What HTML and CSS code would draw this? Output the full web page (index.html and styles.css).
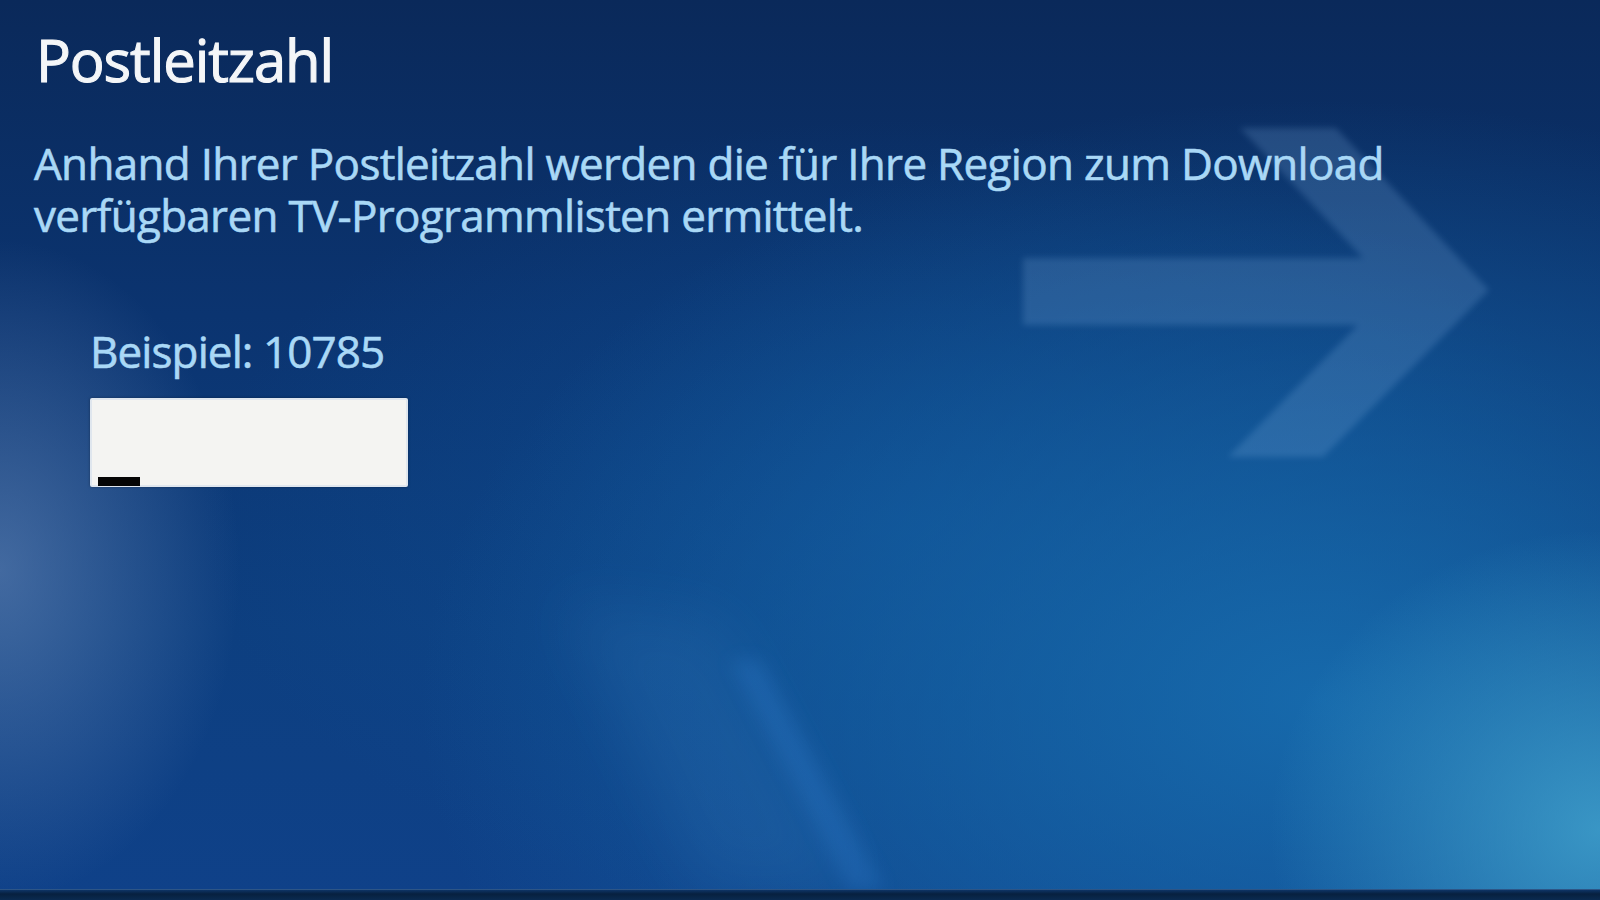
FILE: index.html
```html
<!DOCTYPE html>
<html lang="de">
<head>
<meta charset="utf-8">
<title>Postleitzahl</title>
<link rel="stylesheet" href="styles.css">
</head>
<body>
<div class="screen">
  <svg class="bg-art" viewBox="0 0 1600 900" width="1600" height="900" aria-hidden="true">
    <defs>
      <filter id="soft" x="-20%" y="-20%" width="140%" height="140%">
        <feGaussianBlur stdDeviation="3"/>
      </filter>
      <filter id="wide" x="-50%" y="-50%" width="200%" height="200%">
        <feGaussianBlur stdDeviation="30"/>
      </filter>
      <filter id="line" x="-50%" y="-50%" width="200%" height="200%">
        <feGaussianBlur stdDeviation="9"/>
      </filter>
    </defs>
    <polygon points="560,600 720,620 860,890 700,890" fill="#5aa0e0" opacity="0.10" filter="url(#wide)"/>
    <polygon points="730,660 760,660 885,890 850,890" fill="#3a8ae0" opacity="0.22" filter="url(#line)"/>
    <path d="M1023 258 L1363 258 L1240 128 L1336 128 L1489 290 L1323 457 L1228 457 L1358 325 L1023 325 Z" fill="#8ab8e8" opacity="0.2" filter="url(#soft)"/>
  </svg>
  <main class="content">
    <h1 class="title">Postleitzahl</h1>
    <p class="desc"><span class="line">Anhand Ihrer Postleitzahl werden die für Ihre Region zum Download</span><span class="line">verfügbaren TV-Programmlisten ermittelt.</span></p>
    <div class="field">
      <div class="hint">Beispiel: 10785</div>
      <div class="input"><span class="cursor"></span></div>
    </div>
  </main>
  <div class="bottom-bar"></div>
</div>
</body>
</html>
```
FILE: styles.css
```css
html, body {
  margin: 0;
  padding: 0;
  background: #0b2c60;
}
.screen {
  position: relative;
  width: 1600px;
  height: 900px;
  overflow: hidden;
  font-family: "Open Sans", "Noto Sans", sans-serif;
  background:
    radial-gradient(ellipse 240px 330px at 0px 570px, rgba(120, 150, 195, 0.5), rgba(120, 150, 195, 0) 100%),
    radial-gradient(ellipse 330px 300px at 1600px 830px, rgba(70, 170, 210, 0.75), rgba(70, 170, 210, 0) 100%),
    radial-gradient(ellipse 900px 600px at 1320px 700px, rgba(24, 112, 178, 0.85), rgba(24, 112, 178, 0) 100%),
    radial-gradient(ellipse 700px 400px at 900px 520px, rgba(14, 80, 150, 0.6), rgba(14, 80, 150, 0) 100%),
    linear-gradient(to bottom, #0a295a 0%, #0b3470 35%, #0d3f80 70%, #0f4189 100%);
}
.bg-art {
  position: absolute;
  left: 0;
  top: 0;
}
.content {
  position: relative;
  display: flex;
  flex-direction: column;
  padding: 24px 0 0 34px;
}
.title {
  margin: 0 0 0 2px;
  font-size: 58px;
  line-height: 72px;
  font-weight: 400;
  letter-spacing: -1.1px;
  color: #f4f6f8;
  -webkit-text-stroke: 1.1px #f4f6f8;
}
.desc {
  display: flex;
  flex-direction: column;
  margin: 41px 0 0 0;
  font-size: 44px;
  line-height: 52px;
  font-weight: 400;
  letter-spacing: -0.7px;
  color: #a9d8f6;
  -webkit-text-stroke: 0.6px #a9d8f6;
}
.line {
  display: block;
  height: 52px;
}
.field {
  display: flex;
  flex-direction: column;
  align-items: flex-start;
  margin: 84px 0 0 56px;
}
.hint {
  font-size: 44px;
  line-height: 52px;
  font-weight: 400;
  letter-spacing: -0.9px;
  color: #a9d8f6;
  -webkit-text-stroke: 0.6px #a9d8f6;
}
.input {
  position: relative;
  box-sizing: border-box;
  width: 318px;
  height: 89px;
  margin-top: 21px;
  background: #f4f4f2;
  border: 2px solid #dfe6ee;
  border-radius: 2px;
  box-shadow: 0 0 3px rgba(0, 0, 0, 0.35);
}
.cursor {
  position: absolute;
  left: 6px;
  bottom: -1px;
  width: 42px;
  height: 9px;
  background: #050505;
}
.bottom-bar {
  position: absolute;
  left: 0;
  right: 0;
  bottom: 0;
  height: 10px;
  background: linear-gradient(to bottom, #0e3466 0%, #07203f 40%, #0a2a50 100%);
  border-top: 1px solid rgba(80, 130, 190, 0.5);
}
```
